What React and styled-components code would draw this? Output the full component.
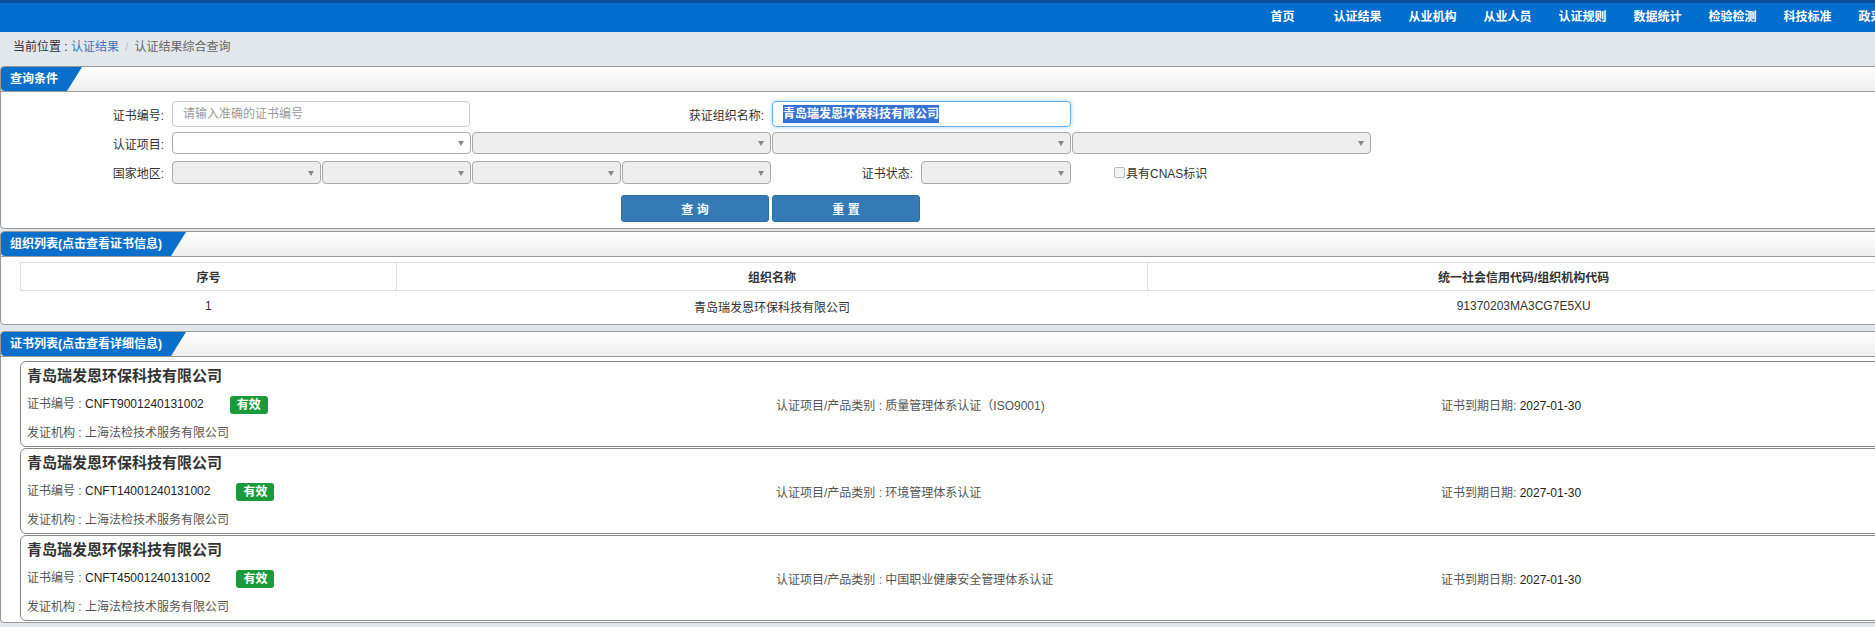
import React from "react";
import styled, { createGlobalStyle } from "styled-components";

const navItems = ["首页", "认证结果", "从业机构", "从业人员", "认证规则", "数据统计", "检验检测", "科技标准", "政采认证"];

const certs = [
  { no: "CNFT9001240131002", item: "质量管理体系认证（ISO9001)" },
  { no: "CNFT14001240131002", item: "环境管理体系认证" },
  { no: "CNFT45001240131002", item: "中国职业健康安全管理体系认证" },
];

function App() {
  return (
    <>
      <GlobalStyle />
      <Page>
        <TopBar>
          <NavList>
            {navItems.map((n) => (
              <NavItem key={n}>{n}</NavItem>
            ))}
          </NavList>
        </TopBar>

        <Crumbs>
          当前位置 : <CrumbLink>认证结果</CrumbLink>
          <CrumbSep>/</CrumbSep>
          <CrumbCurrent>认证结果综合查询</CrumbCurrent>
        </Crumbs>

        <Panel>
          <PanelHead>
            <Tab>查询条件</Tab>
          </PanelHead>
          <Form>
            <FormRow h={26} top={0}>
              <Label>证书编号:</Label>
              <TextInput placeholder="请输入准确的证书编号" />
              <Label>获证组织名称:</Label>
              <FocusBox>
                <Selected>青岛瑞发恩环保科技有限公司</Selected>
              </FocusBox>
            </FormRow>
            <FormRow h={22} top={5}>
              <Label>认证项目:</Label>
              <Select />
              <Select disabled />
              <Select disabled />
              <Select disabled />
            </FormRow>
            <FormRow h={23} top={7}>
              <Label>国家地区:</Label>
              <Pair>
                <Select disabled />
                <Select disabled />
              </Pair>
              <Pair>
                <Select disabled />
                <Select disabled />
              </Pair>
              <Inline>
                <InlineLabel>证书状态:</InlineLabel>
                <Select disabled w={150} />
              </Inline>
              <Check>
                <Box />
                具有CNAS标识
              </Check>
            </FormRow>
            <FormRow h={27} top={11}>
              <span />
              <span />
              <Button align="end">查 询</Button>
              <Button align="start">重 置</Button>
            </FormRow>
          </Form>
        </Panel>

        <Panel gap={2}>
          <PanelHead>
            <Tab>组织列表(点击查看证书信息)</Tab>
          </PanelHead>
          <OrgTable>
            <thead>
              <tr>
                <Th style={{ width: "20%" }}>序号</Th>
                <Th style={{ width: "40%" }}>组织名称</Th>
                <Th>统一社会信用代码/组织机构代码</Th>
              </tr>
            </thead>
            <tbody>
              <tr>
                <Td>1</Td>
                <Td>青岛瑞发恩环保科技有限公司</Td>
                <Td>91370203MA3CG7E5XU</Td>
              </tr>
            </tbody>
          </OrgTable>
        </Panel>

        <Panel gap={6}>
          <PanelHead>
            <Tab>证书列表(点击查看详细信息)</Tab>
          </PanelHead>
          <CardList>
            {certs.map((c) => (
              <Card key={c.no}>
                <CardTitle>青岛瑞发恩环保科技有限公司</CardTitle>
                <CardRow h={28}>
                  <div>
                    <Muted>证书编号 : </Muted>
                    <Value>{c.no}</Value>
                    <Badge>有效</Badge>
                  </div>
                  <Muted>认证项目/产品类别 : {c.item}</Muted>
                  <div>
                    <Muted>证书到期日期: </Muted>
                    <Value>2027-01-30</Value>
                  </div>
                </CardRow>
                <CardRow h={27}>
                  <Muted>发证机构 : 上海法检技术服务有限公司</Muted>
                </CardRow>
              </Card>
            ))}
          </CardList>
        </Panel>
      </Page>
    </>
  );
}

const GlobalStyle = createGlobalStyle`
  html, body {
    margin: 0;
    padding: 0;
  }
  body {
    background: #e2e7eb;
    font-family: "Liberation Sans", "Noto Sans CJK SC", sans-serif;
    font-size: 12px;
    color: #333;
    overflow: hidden;
  }
`;
const Page = styled.div`
  width: 1920px;
`;
const TopBar = styled.div`
  height: 29px;
  border-top: 3px solid #0c4f9b;
  background: #016dcc;
  overflow: hidden;
`;
const NavList = styled.ul`
  display: flex;
  margin: 0 0 0 1245px;
  padding: 0;
  list-style: none;
`;
const NavItem = styled.li`
  flex: 0 0 75px;
  text-align: center;
  color: #fff;
  font-weight: bold;
  font-size: 12px;
  line-height: 28px;
  white-space: nowrap;
`;
const Crumbs = styled.div`
  height: 34px;
  line-height: 30px;
  padding-left: 13px;
  color: #333;
  white-space: nowrap;
`;
const CrumbLink = styled.span`
  color: #3d78b8;
`;
const CrumbSep = styled.span`
  color: #c4c4c4;
  padding: 0 6px;
`;
const CrumbCurrent = styled.span`
  color: #666;
`;
const Panel = styled.div`
  margin-top: ${(p) => p.gap || 0}px;
  background: #fff;
  border: 1px solid #999;
  border-radius: 4px;
  overflow: hidden;
`;
const PanelHead = styled.div`
  height: 24px;
  border-bottom: 1px solid #999;
  background: linear-gradient(#fff, #eeeeee);
  display: flex;
`;
const Tab = styled.div`
  background: #0a6fca;
  color: #fff;
  font-weight: bold;
  line-height: 24px;
  padding: 0 24px 0 9px;
  border-bottom-left-radius: 4px;
  clip-path: polygon(0 0, 100% 0, calc(100% - 15px) 100%, 0 100%);
  white-space: nowrap;
`;
const Form = styled.div`
  padding: 9px 0 6px;
`;
const FormRow = styled.div`
  display: grid;
  grid-template-columns: 170px repeat(4, 299px);
  column-gap: 1px;
  height: ${(p) => p.h}px;
  margin-top: ${(p) => p.top}px;
  align-items: stretch;
`;
const Label = styled.div`
  padding-right: 7px;
  display: flex;
  align-items: center;
  justify-content: flex-end;
  white-space: nowrap;
`;
const TextInput = styled.input`
  box-sizing: border-box;
  width: 298px;
  height: 26px;
  border: 1px solid #ccc;
  border-radius: 4px;
  padding: 0 10px;
  font: inherit;
  outline: none;
  &::placeholder {
    color: #999;
  }
`;
const FocusBox = styled.div`
  box-sizing: border-box;
  height: 26px;
  border: 1px solid #66afe9;
  border-radius: 4px;
  box-shadow: 0 0 4px rgba(102, 175, 233, 0.6);
  padding: 0 10px;
  display: flex;
  align-items: center;
`;
const Selected = styled.span`
  background: #3672d3;
  color: #fff;
  font-weight: bold;
  line-height: 18px;
  white-space: nowrap;
`;
const Select = styled.div`
  box-sizing: border-box;
  position: relative;
  width: ${(p) => (p.w ? `${p.w}px` : "100%")};
  height: 100%;
  border: 1px solid #aaa;
  border-radius: 4px;
  background: ${(p) => (p.disabled ? "#eee" : "#fff")};
  &::after {
    content: "";
    position: absolute;
    right: 6px;
    top: 50%;
    margin-top: -2px;
    border-left: 3px solid transparent;
    border-right: 3px solid transparent;
    border-top: 5px solid #888;
  }
`;
const Pair = styled.div`
  display: grid;
  grid-template-columns: 149px 149px;
  column-gap: 1px;
`;
const Inline = styled.div`
  display: flex;
  align-items: stretch;
  justify-content: flex-end;
`;
const InlineLabel = styled.span`
  display: flex;
  align-items: center;
  padding-right: 8px;
`;
const Check = styled.label`
  display: flex;
  align-items: center;
  padding-left: 42px;
  white-space: nowrap;
`;
const Box = styled.span`
  box-sizing: border-box;
  width: 11px;
  height: 11px;
  border: 1px solid #bbb;
  border-radius: 2px;
  background: #f3f3f3;
  margin-right: 1px;
`;
const Button = styled.button`
  justify-self: ${(p) => p.align};
  width: 148px;
  height: 27px;
  margin-right: ${(p) => (p.align === "end" ? "2px" : "0")};
  background: #337ab7;
  border: 1px solid #2e6da4;
  border-radius: 3px;
  color: #fff;
  font: inherit;
  font-weight: bold;
  white-space: pre;
`;
const OrgTable = styled.table`
  width: 1880px;
  margin: 5px 19px 3px;
  border-collapse: collapse;
`;
const Th = styled.th`
  height: 27px;
  border: 1px solid #ddd;
  font-weight: bold;
  text-align: center;
  padding: 0;
`;
const Td = styled.td`
  height: 30px;
  text-align: center;
  padding: 0;
  color: #333;
`;
const CardList = styled.div`
  padding: 4px 19px 0;
`;
const Card = styled.div`
  border: 1px solid #888;
  border-radius: 6px;
  padding: 3px 6px 0;
  margin-bottom: 1px;
  height: 81px;
`;
const CardTitle = styled.div`
  font-size: 15px;
  font-weight: bold;
  line-height: 22px;
  color: #333;
  margin-bottom: 3px;
`;
const CardRow = styled.div`
  display: grid;
  grid-template-columns: 749px 665px 1fr;
  height: ${(p) => p.h}px;
  align-items: center;
  white-space: nowrap;
`;
const Muted = styled.span`
  color: #555;
`;
const Value = styled.span`
  color: #222;
`;
const Badge = styled.span`
  display: inline-block;
  margin-left: 26px;
  padding: 0 7px;
  height: 18px;
  line-height: 18px;
  background: #1a9a3a;
  color: #fff;
  font-weight: bold;
  border-radius: 3px;
  vertical-align: middle;
`;

export default App;
